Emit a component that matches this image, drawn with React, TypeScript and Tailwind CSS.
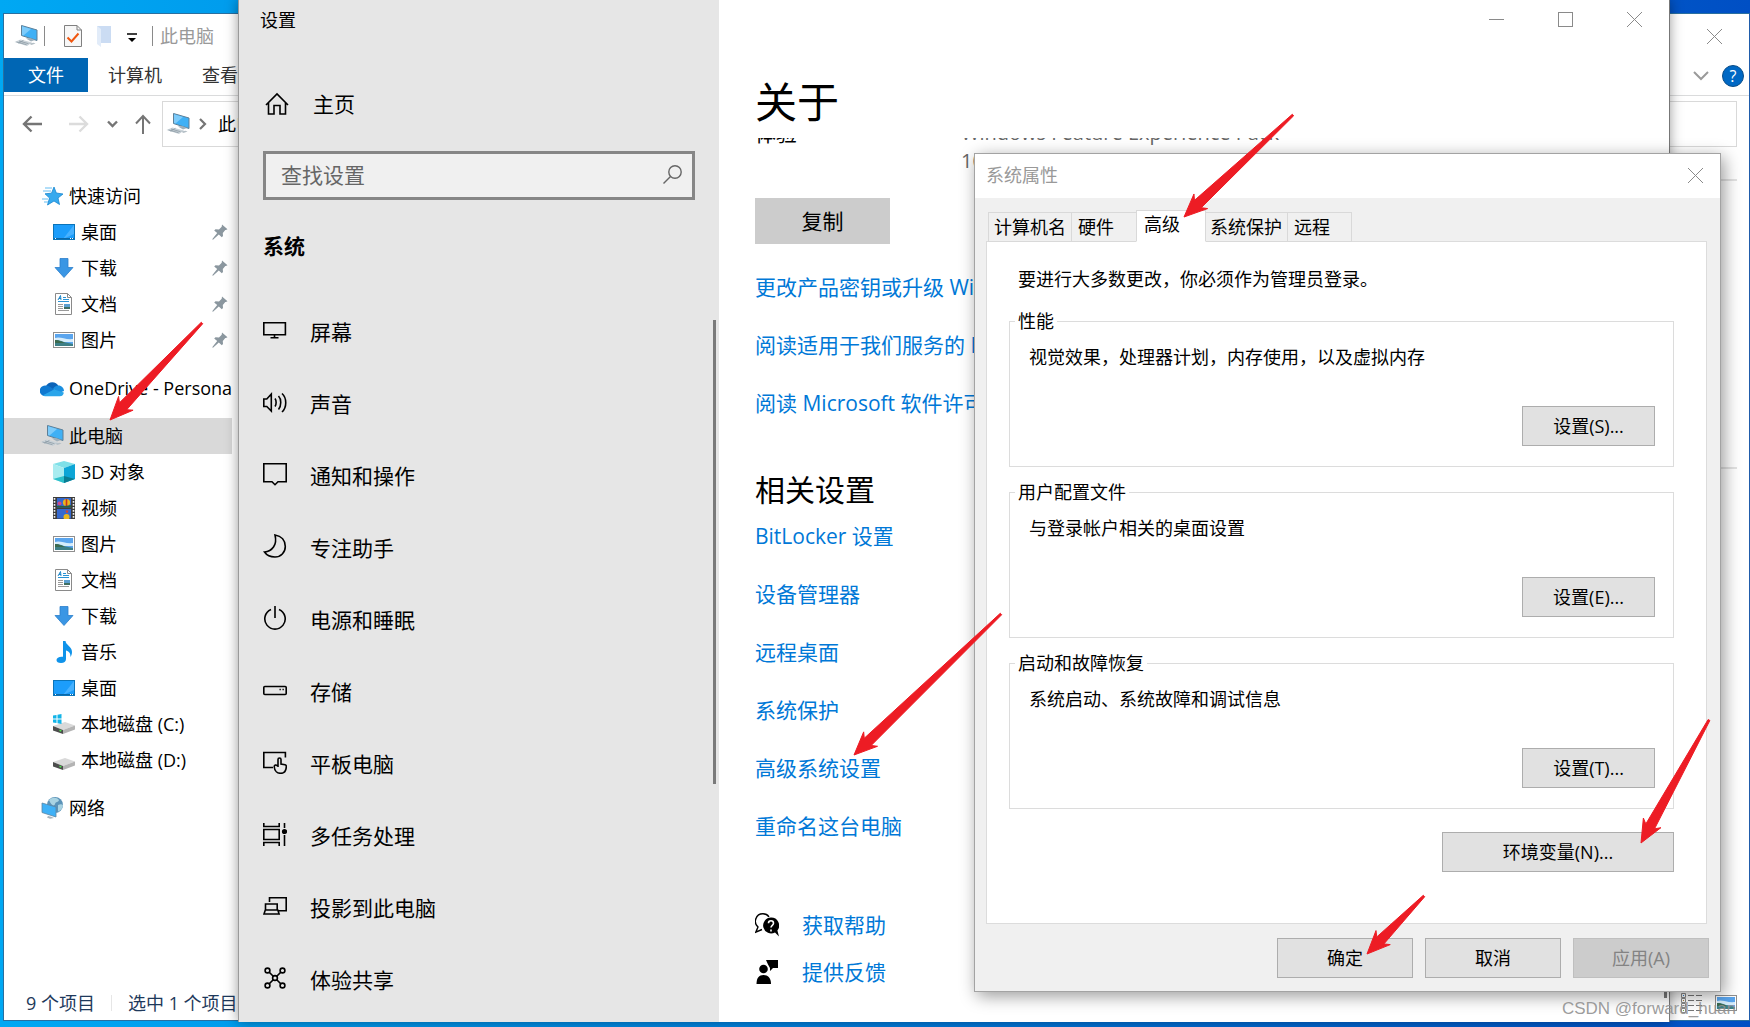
import type { ReactNode } from "react";

type IconProps = { className?: string };

/* ---------- explorer icons ---------- */

function PcIcon({ className = "w-6 h-[22px]" }: IconProps) {
  return (
    <svg viewBox="0 0 24 22" className={className} aria-hidden="true">
      <path d="M7.5 .5 23 5v10.5L7.5 10.5Z" fill="#3fb0f5" stroke="#5d7f97" strokeWidth="1" />
      <path d="M8 1.2 17 4 9.500 10.500 8 10Z" fill="#7dcbfa" />
      <path d="m12 13.500 4-.5 5 2-4 1.500Z" fill="#9fb0bb" />
      <path d="m.5 17 6-2.500 11.500 3-5 3.500Z" fill="#c9d2d8" />
      <path d="m2.500 17 10 2.700M5 16l9.500 2.700M4.500 18.300l5-3" stroke="#8c9aa4" strokeWidth=".8" fill="none" />
      <path d="m15 18.500 4.500-.8 2 .8-4 1.500Z" fill="#b4bfc6" />
    </svg>
  );
}

function StarIcon() {
  return (
    <svg viewBox="0 0 24 22" className="w-6 h-[22px]" aria-hidden="true">
      <path d="m14 2 2.300 6 6.700 1-5 4 1.500 6.500-5.500-3.500-6.500 4L9.500 13 5 8.800l6.500-.6Z" fill="#36a9ee" stroke="#1787d0" strokeWidth=".8" />
      <path d="M5 3h7M3 6h8M2 14h6M4 17h4" stroke="#64bdf2" strokeWidth="1" />
    </svg>
  );
}

function DesktopIcon() {
  return (
    <svg viewBox="0 0 22 22" className="size-[22px]" aria-hidden="true">
      <rect x=".5" y="3.500" width="21" height="15" fill="#1c9dfb" stroke="#0b74b9" />
      <path d="M21 4v9L10 18 21 4Z" fill="#47b1ff" />
      <path d="M1 17.500h20" stroke="#0a68a8" />
      <path d="M17 17.500h1M19 17.500h1M2 17.500h1" stroke="#fff" />
    </svg>
  );
}

function DownloadIcon() {
  return (
    <svg viewBox="0 0 22 22" className="size-[22px]" aria-hidden="true">
      <path d="M7 1.500h8v9h5l-9 10-9-10h5Z" fill="#3a96e4" stroke="#2b7fcb" strokeWidth=".8" />
    </svg>
  );
}

function DocumentIcon() {
  return (
    <svg viewBox="0 0 22 22" className="size-[22px]" aria-hidden="true">
      <path d="M2.500.5h12l4 4v17h-16Z" fill="#fff" stroke="#8a8a8a" />
      <path d="M14.500.5v4h4" fill="none" stroke="#8a8a8a" />
      <path d="m5 7 2.500-4.500L8 7M6 5.500h2" fill="none" stroke="#1d86c8" />
      <path d="M10 4.500h3M10 6.500h6M5 8.500h11" stroke="#2a93d4" />
      <path d="M5 11.500h5M5 13.500h5M5 15.500h5M5 17.500h11" stroke="#9a9a9a" />
      <rect x="11" y="11" width="6" height="5" fill="#5b9fd0" />
      <path d="M11 14h6v2h-6Z" fill="#3f6e62" />
    </svg>
  );
}

function PictureIcon() {
  return (
    <svg viewBox="0 0 22 22" className="size-[22px]" aria-hidden="true">
      <rect x=".5" y="3.500" width="21" height="15" fill="#fff" stroke="#8f8f8f" />
      <rect x="2" y="5" width="18" height="12" fill="#5aa5ee" />
      <path d="M2 9c5-2 10 2 18 1v3H2Z" fill="#d5ecfb" />
      <path d="M2 11c6 0 8 2 11 2.500L20 15v2H2Z" fill="#3d7f86" />
      <path d="M2 11c4 0 7 2 10 3H2Z" fill="#3c6a4e" />
    </svg>
  );
}

function OneDriveIcon() {
  return (
    <svg viewBox="0 0 24 22" className="w-6 h-[22px]" aria-hidden="true">
      <path d="M6 9a7 7 0 0 1 12.500 0L12 14Z" fill="#0b63b8" />
      <path d="M5 19a5 5 0 0 1 0-10.500c4 0 6 2 9 4L7 19Z" fill="#1079d0" />
      <path d="M18.500 8.500c3 0 5.500 2.500 5.500 5.500l-5 2-6-4c1-2 3-3.500 5.500-3.500Z" fill="#1a8fe0" />
      <path d="M3 18.300 14 12.500l9.800 3a4 4 0 0 1-4 3.700H5c-.8 0-1.500-.3-2-.9Z" fill="#2aa5ea" />
    </svg>
  );
}

function CubeIcon() {
  return (
    <svg viewBox="0 0 22 22" className="size-[22px]" aria-hidden="true">
      <path d="m11 0 11 3-11 4L0 3Z" fill="#7fe0e8" />
      <path d="m0 3 11 4v15L0 18Z" fill="#a8ecf0" />
      <path d="m22 3-11 4v15l11-4Z" fill="#0da5d6" />
      <path d="m0 18 11-3v7Z" fill="#2cc0cb" />
      <path d="m11 15 11 3-11 4Z" fill="#0a7d92" />
    </svg>
  );
}

function VideoIcon() {
  return (
    <svg viewBox="0 0 22 22" className="size-[22px]" aria-hidden="true">
      <path d="M0 0h22v22H0Z" fill="#3c3c3c" />
      <path d="M1.500 1v20M20.500 1v20" stroke="#f2f2f2" strokeWidth="1.600" strokeDasharray="1.800 1.200" />
      <path d="M4 1h14v9.500H4ZM4 12h14v9.500H4Z" fill="#3569cf" />
      <circle cx="13.500" cy="5.500" r="3.600" fill="#e9b51c" />
      <path d="M13.500 2v7" stroke="#c8331f" strokeWidth="1.600" />
      <circle cx="6.500" cy="6.500" r="2" fill="#cf4a8c" />
      <circle cx="13.500" cy="20" r="3" fill="#e9b51c" />
      <path d="M12.500 13.500h3l-1 2.500h-1Z" fill="#d8462a" />
      <path d="M4 9c3-1 5 1 14-1v2.500H4Z" fill="#27613f" />
    </svg>
  );
}

function MusicIcon() {
  return (
    <svg viewBox="0 0 22 22" className="size-[22px]" aria-hidden="true">
      <path d="M10 0h2.500c.4 4 6.500 5.500 6.500 11 0 2-.6 3.800-1.600 5 .4-4-1.900-6-4.400-6.500V18c0 2.500-2 4-5 4s-4.500-1.200-4.500-3c0-2.200 3-3.800 6.500-3.200Z" fill="#0f93ea" />
    </svg>
  );
}

function DriveIcon({ system = false }: { system?: boolean }) {
  return (
    <svg viewBox="0 0 22 22" className="size-[22px]" aria-hidden="true">
      <path d="m0 13 12-4 10 3.500-12 4.500Z" fill="#d9d9d9" />
      <path d="m0 13 10 4v4L0 17.500Z" fill="#4d4d4d" />
      <path d="m22 12.500-12 4.500v4l12-4.500Z" fill="#b4b4b4" />
      <path d="m6.500 17.300 1.800.7" stroke="#4fe24f" strokeWidth="1.600" />
      {system ? <path d="M0 2.500 3.500 2v3.500H0ZM4.500 1.800 8.500 1v4.500h-4ZM0 6.500h3.500V10L0 9.500ZM4.500 6.500h4V11l-4-.8Z" fill="#12b4e8" /> : null}
    </svg>
  );
}

function NetworkIcon() {
  return (
    <svg viewBox="0 0 24 22" className="w-6 h-[22px]" aria-hidden="true">
      <circle cx="15" cy="8" r="8" fill="#5b93b8" />
      <path d="M9 3c3-3 8-3 10 0-1 3-3 1-4 4s-4 1-6-4ZM18 8c2-1 4-1 5 0-.5 4-3 6-5 6.500Z" fill="#a9d3e2" />
      <path d="m2 6 14 4v10L2 15.500Z" fill="#3fb1f7" stroke="#5d86a3" strokeWidth=".8" />
      <path d="m8 19 3 .8 3 1.200-4 .8-3-1.300Z" fill="#a7b3bb" />
    </svg>
  );
}

function PinIcon() {
  return (
    <svg viewBox="0 0 16 16" className="size-4" aria-hidden="true">
      <path d="m10 .5 5.500 4.800-1.600.8-.6-.2-2.500 3 .2 3.200-1.200 1.200-3-2.800L1 15.800l-.8-.6 5-6.200-3-2.500 1.300-1.300 3.500.2 2.700-2.600Z" fill="#8b979f" />
    </svg>
  );
}

function CloseIcon() {
  return (
    <svg viewBox="0 0 15 15" className="size-[15px]" aria-hidden="true">
      <path d="m0 0 15 15M15 0 0 15" stroke="#8a8a8a" fill="none" />
    </svg>
  );
}

/* ---------- settings icons ---------- */

function Line({ children }: { children: ReactNode }) {
  return (
    <svg viewBox="0 0 24 24" className="size-6 shrink-0" fill="none" stroke="#000" strokeWidth="1.600" aria-hidden="true">
      {children}
    </svg>
  );
}

const settingsItems: { label: string; icon: ReactNode }[] = [
  { label: "屏幕", icon: <Line><path d="M.8 4.700h21.600v12H.8ZM11.500 17v3M7.500 19.800h8" /></Line> },
  { label: "声音", icon: <Line><path d="M.8 9h3l4.500-5v17l-4.500-4.500h-3ZM12 8.500c1.500 2 1.500 6 0 8M15.500 6c3 3 3 10 0 13.500M19 3.500c5 4.500 5 14 0 18.500" /></Line> },
  { label: "通知和操作", icon: <Line><path d="M.8 1.700h22.400v18H15l-3 3-3-3H.8Z" /></Line> },
  { label: "专注助手", icon: <Line><path d="M12 1c6.500 1 10.300 5.500 10.300 11.500 0 6-4.500 10.500-10.300 10.500-4.500 0-8.500-2-10.500-5C9 17.500 14.500 11 12 1Z" /></Line> },
  { label: "电源和睡眠", icon: <Line><path d="M12 0v12M8 3.500a10.200 10.200 0 1 0 8 0" /></Line> },
  { label: "存储", icon: <Line><rect x=".8" y="8.500" width="22.400" height="8" rx="1" /><path d="M16.500 11.500h1.300M19.500 11.500h1.300" /></Line> },
  { label: "平板电脑", icon: <Line><path d="M10 17.500H.8v-15h21.600v5M15 17V9.500c0-2 3-2 3 0v4.500l4 .8c1 .3 1.500 1 1.300 2-.2 4-2 6.500-5.500 6.500-3.300 0-6.300-2.300-6.600-6.600 0-1.800 2-2.200 3.300-.7" /></Line> },
  { label: "多任务处理", icon: <Line><path d="M.8 1v3.500h15.400V1M.8 7.500h15.400v10H.8ZM.8 24v-3.500h15.400V24M21.500 1v5M21.500 13v11" /><circle cx="21.500" cy="9.500" r="1.800" fill="#000" /></Line> },
  { label: "投影到此电脑", icon: <Line><path d="M6.500 8V3.700h16.700v13h-8M2.500 16v-6h11.700v6M1 20l1.300-4h12.500l1.300 4Z" /></Line> },
  { label: "体验共享", icon: <Line><path d="m5 5 14 14M19 5 5 19" /><g fill="#e6e6e6"><circle cx="4.500" cy="4.500" r="2.400" /><circle cx="19.500" cy="4.500" r="2.400" /><circle cx="4.500" cy="19.500" r="2.400" /><circle cx="19.500" cy="19.500" r="2.400" /><circle cx="12" cy="12" r="2.400" /></g></Line> },
];

/* ---------- explorer window ---------- */

type NavEntry = { label: string; icon: ReactNode; root?: boolean; pinned?: boolean; selected?: boolean; spaced?: boolean };

const navEntries: NavEntry[] = [
  { label: "快速访问", icon: <StarIcon />, root: true },
  { label: "桌面", icon: <DesktopIcon />, pinned: true },
  { label: "下载", icon: <DownloadIcon />, pinned: true },
  { label: "文档", icon: <DocumentIcon />, pinned: true },
  { label: "图片", icon: <PictureIcon />, pinned: true },
  { label: "OneDrive - Personal", icon: <OneDriveIcon />, root: true, spaced: true },
  { label: "此电脑", icon: <PcIcon />, root: true, spaced: true, selected: true },
  { label: "3D 对象", icon: <CubeIcon /> },
  { label: "视频", icon: <VideoIcon /> },
  { label: "图片", icon: <PictureIcon /> },
  { label: "文档", icon: <DocumentIcon /> },
  { label: "下载", icon: <DownloadIcon /> },
  { label: "音乐", icon: <MusicIcon /> },
  { label: "桌面", icon: <DesktopIcon /> },
  { label: "本地磁盘 (C:)", icon: <DriveIcon system /> },
  { label: "本地磁盘 (D:)", icon: <DriveIcon /> },
  { label: "网络", icon: <NetworkIcon />, root: true, spaced: true },
];

function NavRow({ entry }: { entry: NavEntry }) {
  return (
    <li className={entry.spaced ? "mt-3" : ""}>
      <a
        href="#"
        className={`flex h-9 items-center overflow-hidden whitespace-nowrap pr-1 ${entry.root ? "pl-9 gap-[5px]" : "pl-[49px] gap-[6px]"} ${entry.selected ? "bg-[#d9d9d9]" : ""}`}
      >
        <span className="shrink-0">{entry.icon}</span>
        <span className="flex-1">{entry.label}</span>
        {entry.pinned ? <PinIcon /> : null}
      </a>
    </li>
  );
}

function ExplorerWindow() {
  return (
    <section className="absolute left-[3px] right-0 top-[13px] bottom-[6px] flex flex-col border border-[#2a6f9f] border-r-[#1f5cab] bg-white text-[18px] leading-6">
      <div className="flex h-11 items-center pl-[10px] pr-[27px]">
        <PcIcon />
        <span className="ml-[6px] h-5 w-px bg-[#8a8a8a]" />
        <svg viewBox="0 0 18 22" className="ml-[19px] w-[18px] h-[22px]" aria-hidden="true">
          <path d="M.5.5H13l4.500 4.500v16.500H.5Z" fill="#f7f7f7" stroke="#808080" />
          <path d="M13 .5v4.500h4.500" fill="none" stroke="#808080" />
          <path d="m3.500 12.500 4 4 7-8" fill="none" stroke="#f0560f" strokeWidth="2" />
        </svg>
        <svg viewBox="0 0 15 22" className="ml-[15px] w-[15px] h-[22px]" aria-hidden="true">
          <path d="M0 1h14v17H3Z" fill="#cbdcf3" />
          <path d="m0 1 4 3v18l-4-3Z" fill="#e2ecf9" />
        </svg>
        <svg viewBox="0 0 10 10" className="ml-[15px] mt-1 size-[10px]" aria-hidden="true">
          <path d="M0 1h10" stroke="#000" strokeWidth="1.500" />
          <path d="M1 5h8l-4 4Z" />
        </svg>
        <span className="ml-[15px] h-5 w-px bg-[#8a8a8a]" />
        <span className="ml-[7px] flex-1 text-[#999]">此电脑</span>
        <button type="button" aria-label="关闭"><CloseIcon /></button>
      </div>

      <div className="flex h-[38px] items-start border-b border-[#dadbdc] pr-[5px] text-[#333]">
        <button type="button" className="h-[34px] w-[84px] bg-[#0066b4] text-white">文件</button>
        <button type="button" className="ml-5 h-[34px]">计算机</button>
        <button type="button" className="ml-10 h-[34px]">查看</button>
        <span className="flex-1" />
        <svg viewBox="0 0 16 10" className="mt-[13px] mr-[13px] h-[10px] w-4" aria-hidden="true">
          <path d="m1 1 7 7 7-7" fill="none" stroke="#9a9a9a" strokeWidth="2" />
        </svg>
        <button type="button" aria-label="帮助" className="mt-[7px] size-[22px] rounded-full border border-[#0a4d88] bg-[#0068c4] text-base leading-5 text-white">?</button>
      </div>

      <div className="mt-[5px] flex h-[46px] items-center pr-3">
        <svg viewBox="0 0 140 24" className="ml-[18px] h-6 w-[140px]" fill="none" strokeWidth="2.400" aria-hidden="true">
          <path d="M20 12H2M9.500 4.500 2 12l7.500 7.500" stroke="#757575" />
          <path d="M47 12h18M57.500 4.500 65 12l-7.500 7.500" stroke="#dcdcdc" />
          <path d="m86 9.500 4.500 4.500 4.500-4.500" stroke="#757575" />
          <path d="M121 22V4M114 11.500l7-7.500 7 7.500" stroke="#757575" strokeWidth="2" />
        </svg>
        <div className="flex h-full flex-1 items-center border border-[#d9d9d9] pl-[3px]">
          <PcIcon />
          <svg viewBox="0 0 8 12" className="ml-[9px] mr-[11px] h-3 w-2" aria-hidden="true">
            <path d="m1 1 5 5-5 5" fill="none" stroke="#757575" strokeWidth="2.200" />
          </svg>
          <span>此电脑</span>
        </div>
      </div>

      <div className="flex min-h-0 flex-1 justify-between pt-[31px]">
        <nav className="w-[228px] text-black">
          <ul>
            {navEntries.map((entry, i) => (
              <NavRow key={i} entry={entry} />
            ))}
          </ul>
        </nav>
        <div className="mr-3 mt-px h-[290px] w-3/4 border-y-2 border-[#e3e3e3]" />
      </div>

      <footer className="flex h-[34px] items-center pl-[22px] pr-3 text-[#1e395b]">
        <span>9 个项目</span>
        <span className="ml-4 h-4 w-px bg-[#e6e6e6]" />
        <span className="ml-4 flex-1">选中 1 个项目</span>
        <svg viewBox="0 0 22 20" className="mr-3 h-5 w-[22px]" aria-hidden="true">
          <path d="M.5.500h4v4h-4ZM.5 5.500h4v4h-4ZM.5 10.500h4v4h-4ZM.5 15.500h4v4h-4Z" fill="#fff" stroke="#8a8a8a" />
          <path d="M2 2.500h1" stroke="#2a7fd0" />
          <path d="M2 7.500h1" stroke="#b08040" />
          <path d="M2 12.500h1" stroke="#c00" />
          <path d="M2 17.500h1" stroke="#7a4" />
          <path d="M7 2.500h14M7 7.500h14M7 12.500h14M7 17.500h14" stroke="#777" strokeDasharray="6 2" />
        </svg>
        <PictureIcon />
      </footer>
    </section>
  );
}

/* ---------- settings window ---------- */

function SettingsSidebar() {
  return (
    <aside className="flex w-[480px] shrink-0 flex-col bg-[#e6e6e6]">
      <h1 className="pl-[21px] pt-2 text-[18px] leading-6">设置</h1>
      <a href="#" className="mt-[52px] flex h-10 items-center gap-6 pl-[26px]">
        <svg viewBox="0 0 24 24" className="size-6" fill="none" stroke="#000" strokeWidth="1.600" aria-hidden="true">
          <path d="M1 13 12 2l11 11M3.500 11v11H9v-8.500h6V22h5.500V11" />
        </svg>
        主页
      </a>
      <label className="mx-6 mt-[27px] flex h-[49px] items-center border-[3px] border-[#868686] bg-[#f0f0f0] pb-[2px] pl-[15px] pr-[10px]">
        <input type="text" placeholder="查找设置" aria-label="查找设置" className="min-w-0 flex-1 bg-transparent outline-none placeholder:text-[#666]" />
        <svg viewBox="0 0 19 19" className="size-[19px]" fill="none" stroke="#666" strokeWidth="1.400" aria-hidden="true">
          <circle cx="12" cy="7" r="6.200" />
          <path d="M7.500 11.500.5 18.500" />
        </svg>
      </label>
      <h2 className="mt-8 pl-6 font-bold leading-7">系统</h2>
      <div className="mt-9 flex min-h-0 flex-1">
        <ul className="flex-1">
          {settingsItems.map((item) => (
            <li key={item.label}>
              <a href="#" className="flex h-[72px] items-center gap-[23px] pl-6">
                <span className="pb-1">{item.icon}</span>
                {item.label}
              </a>
            </li>
          ))}
        </ul>
        <div className="mr-[3px] mt-6 h-[464px] w-[3px] bg-[#7a7a7a]" />
      </div>
    </aside>
  );
}

const productLinks = ["更改产品密钥或升级 Windows", "阅读适用于我们服务的 Microsoft 服务协议", "阅读 Microsoft 软件许可条款"];
const relatedLinks = ["BitLocker 设置", "设备管理器", "远程桌面", "系统保护", "高级系统设置", "重命名这台电脑"];

function LinkList({ links }: { links: string[] }) {
  return (
    <ul className="text-[#0078d7]">
      {links.map((link) => (
        <li key={link} className="flex h-[58px] items-center">
          <a href="#" className="whitespace-nowrap">{link}</a>
        </li>
      ))}
    </ul>
  );
}

function SettingsWindow() {
  return (
    <section className="absolute left-[238px] right-[80px] top-0 bottom-[5px] flex border-x border-[#9a9a9a] border-r-[#777] bg-white text-[21px] leading-7 text-black shadow-[0_0_12px_rgba(0,0,0,0.4)]">
      <SettingsSidebar />
      <div className="flex min-w-0 flex-1 flex-col pl-9">
        <div className="flex h-[39px] justify-end">
          <button type="button" aria-label="最小化" className="grid w-[69px] place-items-center"><span className="h-px w-[15px] bg-[#8a8a8a]" /></button>
          <button type="button" aria-label="最大化" className="grid w-[69px] place-items-center"><span className="size-[15px] border border-[#8a8a8a]" /></button>
          <button type="button" aria-label="关闭" className="grid w-[69px] place-items-center"><CloseIcon /></button>
        </div>
        <h1 className="flex h-[99px] items-center pt-[26px] text-[42px] leading-[70px]">关于</h1>
        <div className="flex min-h-0 flex-1 overflow-hidden">
          <div className="min-w-0 flex-1">
            <dl className="-mt-[19px] flex">
              <dt className="w-[206px]">体验</dt>
              <dd className="text-[20px] whitespace-nowrap text-[#666]">
                Windows Feature Experience Pack
                <br />
                1000.19061.1000.0
              </dd>
            </dl>
            <button type="button" className="mt-[23px] h-[46px] w-[135px] bg-[#ccc]">复制</button>
            <div className="mt-[14px]"><LinkList links={productLinks} /></div>
            <h2 className="mt-[41px] text-[30px] leading-[34px]">相关设置</h2>
            <LinkList links={relatedLinks} />
            <ul className="mt-[46px] text-[#0078d7]">
              <li className="flex h-[47px] items-center gap-[23px]">
                <svg viewBox="0 0 24 24" className="size-6" aria-hidden="true">
                  <path d="M8 .8A7.500 7.500 0 0 0 3 14l-2.200 5.200L7 16.500" fill="none" stroke="#000" strokeWidth="1.400" />
                  <path d="M8 .8a7.500 7.500 0 0 1 6 3" fill="none" stroke="#000" strokeWidth="1.400" />
                  <path d="M16 4.500a8 8 0 1 0 4 15l4 4-1.600-6A8 8 0 0 0 16 4.500Z" fill="#000" />
                  <path d="M13.500 10.200c0-3.200 5-3.200 5 0 0 2-2.500 2.200-2.500 4.300M16 16.500v2" fill="none" stroke="#fff" strokeWidth="1.600" />
                </svg>
                <a href="#">获取帮助</a>
              </li>
              <li className="flex h-[47px] items-center gap-[23px]">
                <svg viewBox="0 0 24 24" className="size-6" aria-hidden="true">
                  <circle cx="8.500" cy="9" r="4.300" />
                  <path d="M1.500 24c0-6 2.500-9 7-9s7.500 3 7.500 9Z" />
                  <path d="M11 0h12v8h-5l-3 3V8l-2-3.500Z" />
                </svg>
                <a href="#">提供反馈</a>
              </li>
            </ul>
          </div>
          <div className="mr-[2px] mt-[182px] h-[678px] w-[3px] bg-[#7a7a7a]" />
        </div>
      </div>
    </section>
  );
}

/* ---------- system properties dialog ---------- */

const groups = [
  { title: "性能", text: "视觉效果，处理器计划，内存使用，以及虚拟内存", button: "设置(S)..." },
  { title: "用户配置文件", text: "与登录帐户相关的桌面设置", button: "设置(E)..." },
  { title: "启动和故障恢复", text: "系统启动、系统故障和调试信息", button: "设置(T)..." },
];

const tabs = [
  { label: "计算机名", className: "w-[84px] h-[30px] -mr-px pl-[5px]" },
  { label: "硬件", className: "w-[66px] h-[30px] -mr-px pl-[6px]" },
  { label: "高级", className: "w-[70px] h-8 -mr-px pl-[7px] pb-1 border-b-white bg-white", active: true },
  { label: "系统保护", className: "w-[83px] h-[30px] -mr-px pl-1" },
  { label: "远程", className: "w-[65px] h-[30px] pl-[6px]" },
];

function PushButton({ children, className = "", disabled = false }: { children: ReactNode; className?: string; disabled?: boolean }) {
  return (
    <button
      type="button"
      disabled={disabled}
      className={`h-10 border ${disabled ? "border-[#bfbfbf] bg-[#ccc] text-[#838383]" : "border-[#adadad] bg-[#e1e1e1]"} ${className}`}
    >
      {children}
    </button>
  );
}

function SystemPropertiesDialog() {
  return (
    <section className="absolute isolate left-[974px] top-[153px] w-[747px] border border-[#a3a3a3] bg-[#f0f0f0] text-[18px] leading-6 text-black shadow-[3px_4px_16px_rgba(0,0,0,0.4)]">
      <header className="flex h-11 items-center justify-between bg-white pb-[2px] pl-[11px] pr-[17px] text-[#999]">
        <h1>系统属性</h1>
        <button type="button" aria-label="关闭"><CloseIcon /></button>
      </header>
      <div role="tablist" className="ml-[13px] mt-3 flex h-8 items-end">
        {tabs.map((tab) => (
          <button
            key={tab.label}
            type="button"
            role="tab"
            aria-selected={Boolean(tab.active)}
            className={`relative whitespace-nowrap border border-[#d9d9d9] text-left ${tab.active ? "z-10" : ""} ${tab.className}`}
          >
            {tab.label}
          </button>
        ))}
      </div>
      <div className="ml-[11px] mr-[13px] -mt-px flex flex-col border border-[#dcdcdc] bg-white pb-[51px] pl-[22px] pr-8 pt-[25px]">
        <p className="pl-[9px]">要进行大多数更改，你必须作为管理员登录。</p>
        <div className="mt-[18px] flex flex-col gap-[13px]">
          {groups.map((group) => (
            <fieldset key={group.title} className="flex flex-col border border-[#dcdcdc] pb-5 pl-[5px] pr-[18px]">
              <legend className="px-[3px]">{group.title}</legend>
              <p className="mt-3 pl-[14px]">{group.text}</p>
              <PushButton className="mt-[37px] w-[133px] self-end">{group.button}</PushButton>
            </fieldset>
          ))}
        </div>
        <PushButton className="mt-[23px] w-[232px] self-end">环境变量(N)...</PushButton>
      </div>
      <footer className="mb-[13px] mr-[11px] mt-[14px] flex justify-end gap-3">
        <PushButton className="w-[136px]">确定</PushButton>
        <PushButton className="w-[136px]">取消</PushButton>
        <PushButton className="w-[136px]" disabled>应用(A)</PushButton>
      </footer>
    </section>
  );
}

/* ---------- annotations ---------- */

type Point = [number, number];

const arrows: { tail: Point; tip: Point }[] = [
  { tail: [202, 323], tip: [110, 420] },
  { tail: [1293, 115], tip: [1184, 217] },
  { tail: [1001, 614], tip: [854, 755] },
  { tail: [1709, 720], tip: [1641, 843] },
  { tail: [1424, 896], tip: [1367, 954] },
];

// A tapered shaft with a barbed head, described along and across its own axis.
function arrowPoints(tail: Point, tip: Point) {
  const length = Math.hypot(tail[0] - tip[0], tail[1] - tip[1]);
  const dx = (tail[0] - tip[0]) / length;
  const dy = (tail[1] - tip[1]) / length;
  const outline: Point[] = [[0, 0], [23, 10], [19, 5], [length, 1], [length, -1], [19, -5], [23, -10]];
  return outline.map(([a, b]) => `${tip[0] + dx * a - dy * b},${tip[1] + dy * a + dx * b}`).join(" ");
}

function Arrows() {
  return (
    <svg className="pointer-events-none absolute left-0 top-0 h-full w-full" aria-hidden="true">
      {arrows.map(({ tail, tip }) => (
        <polygon key={tip.join()} points={arrowPoints(tail, tip)} fill="#ed1c24" stroke="#ed1c24" strokeLinejoin="round" />
      ))}
    </svg>
  );
}

export default function App() {
  return (
    <main className="relative h-screen w-full overflow-hidden bg-linear-to-r from-[#00a8f3] to-[#004fc4] font-['Open_Sans','Noto_Sans_CJK_SC',sans-serif]">
      <ExplorerWindow />
      <SettingsWindow />
      <SystemPropertiesDialog />
      <Arrows />
      <p className="absolute bottom-[6px] right-[14px] font-['Liberation_Sans',sans-serif] text-[17px] leading-6 text-[#909090]/90">CSDN @forward_huan</p>
    </main>
  );
}
